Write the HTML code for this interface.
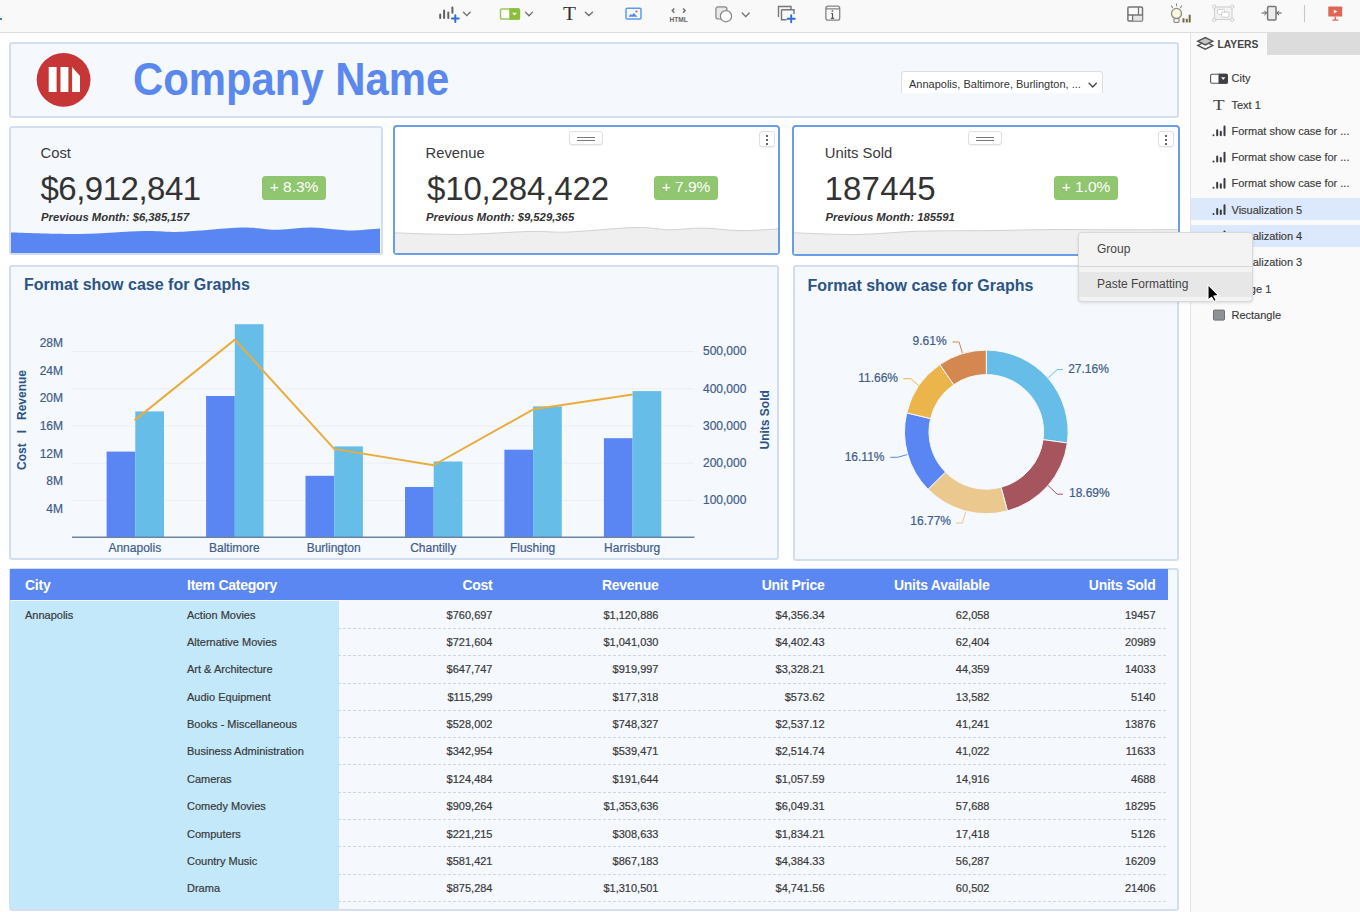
<!DOCTYPE html>
<html><head><meta charset="utf-8">
<style>
*{box-sizing:border-box;margin:0;padding:0}
html,body{width:1360px;height:912px;overflow:hidden;background:#fff;font-family:"Liberation Sans",sans-serif;position:relative}
.abs{position:absolute}
#toolbar{left:0;top:0;width:1360px;height:33px;background:#f9f9f9;border-bottom:1px solid #dcdedf}
#side{left:1190px;top:33px;width:170px;height:879px;background:#fafafa;border-left:1px solid #e3e3e3}
.panel{position:absolute;background:#f5f8fd;border:2px solid #d3dff1;border-radius:3px}
.sel{position:absolute;background:#fff;border:2px solid #6a9de6;border-radius:4px}
.kl{position:absolute;font-size:14.8px;line-height:1;color:#3a3a3a;white-space:nowrap}
.kv{position:absolute;font-size:33px;line-height:1;color:#333;white-space:nowrap}
.kp{position:absolute;font-size:11.3px;line-height:1;font-weight:bold;font-style:italic;color:#333;white-space:nowrap}
.badge{position:absolute;width:64px;height:23.5px;background:#90c66f;border-radius:3.5px;color:#fff;font-size:15.5px;text-align:center;line-height:22px}
.lay{position:absolute;left:1231.5px;font-size:11px;line-height:11px;color:#3a3a3a;white-space:nowrap;-webkit-text-stroke:0.15px #3a3a3a}
.hl{position:absolute;left:1191px;width:169px;background:#dce8fb}
.th{position:absolute;font-size:14px;font-weight:bold;color:#fff;line-height:14px;letter-spacing:-0.25px;white-space:nowrap}
.thr{width:300px;text-align:right}
.td{position:absolute;font-size:11px;color:#3a3a3a;line-height:11px;white-space:nowrap;-webkit-text-stroke:0.2px #3a3a3a}
.tdr{width:300px;text-align:right}
.dl{position:absolute;left:338px;width:830px;height:1px;background-image:linear-gradient(to right,#c9d6ea 0,#c9d6ea 3px,transparent 3px);background-size:5px 1px}
.handle{position:absolute;top:131px;width:34px;height:14px;background:#fff;border:1px solid #e0e0e0;border-radius:3px;box-shadow:0 1px 1px rgba(0,0,0,.06)}
.handle:before,.handle:after{content:"";position:absolute;left:7px;width:18px;height:1.3px;background:#7a7a7a}
.handle:before{top:4.5px}.handle:after{top:7.5px}
.kebab{position:absolute;top:131px;width:16px;height:16px;background:#fff;border:1px solid #e0e0e0;border-radius:3px;box-shadow:0 1px 1px rgba(0,0,0,.06)}
.kebab i{position:absolute;left:6px;width:2px;height:2px;background:#666}
</style></head>
<body>
<div id="toolbar" class="abs"></div>
<div class="abs" style="left:0;top:18px;width:2px;height:2px;background:#3b78e0"></div>
<svg class="abs" style="left:0;top:0" width="1360" height="33">
<g stroke-linecap="round" fill="none">
 <!-- chart add -->
 <g stroke="#626262" stroke-width="2"><path d="M440.2,14.6V18M444.1,10.4V18M448.3,12.5V18M452.4,7.6V12.7"/></g>
 <path d="M451.9,18.6H458.7M455.3,15.3V22" stroke="#2f6fd6" stroke-width="2"/>
 <path d="M463.5,12.3L466.8,15.6L470.1,12.3" stroke="#6e6e6e" stroke-width="1.3"/>
 <!-- selector -->
 <rect x="500.5" y="9" width="19" height="10" rx="1.5" stroke="#95c65a" stroke-width="1.5" fill="#fff"/>
 <path d="M509.3,8.3H518.5a1.5,1.5 0 0 1 1.5,1.5V18.2a1.5,1.5 0 0 1 -1.5,1.5H509.3Z" fill="#8bbf3b" stroke="none"/>
 <path d="M512.2,12.7H516.8L514.5,15.6Z" fill="#fff" stroke="none"/>
 <path d="M525.5,12.1L529,15.8L532.5,12.1" stroke="#6e6e6e" stroke-width="1.3"/>
 <!-- T -->
 <path d="M585.3,12.3L588.9,15.6L592.5,12.3" stroke="#6e6e6e" stroke-width="1.3"/>
 <!-- image -->
 <rect x="626" y="8.3" width="15" height="10.6" rx="1.2" stroke="#5b9bef" stroke-width="1.5"/>
 <path d="M628.5,16.7L630.6,14L632,15L633.8,12.9L637.6,16.7Z" fill="#4f8fe6" stroke="none"/>
 <circle cx="636.5" cy="11.5" r="1.1" fill="#e8554a" stroke="none"/>
 <!-- html -->
 <path d="M674.3,8.5L672.3,10.6L674.3,12.7M683.1,8.5L685.1,10.6L683.1,12.7" stroke="#6e6e6e" stroke-width="1.5" stroke-linecap="butt"/>
 <!-- shapes -->
 <rect x="715.9" y="6.8" width="11" height="12.2" rx="2.2" fill="#e9e9e9" stroke="#858585" stroke-width="1.2"/>
 <circle cx="726" cy="16.2" r="5.6" fill="#fff" stroke="#858585" stroke-width="1.2"/>
 <path d="M742.2,13L745.7,16.6L749.2,13" stroke="#6e6e6e" stroke-width="1.3"/>
 <!-- duplicate -->
 <path d="M778.5,17V6.5H791V9" stroke="#777" stroke-width="1.4" stroke-linecap="butt"/>
 <path d="M781.5,9.7H794V14M786.5,19.7H781.5V9.7" stroke="#777" stroke-width="1.4" stroke-linecap="butt"/>
 <path d="M787.6,18.7H794.8M791.2,15.1V22.3" stroke="#2f6fd6" stroke-width="1.9"/>
 <!-- info -->
 <rect x="825.9" y="6.2" width="13.8" height="14" rx="2.2" stroke="#858585" stroke-width="1.3"/>
 <path d="M826,8.8H839.6" stroke="#858585" stroke-width="1.3"/>
 <path d="M832.5,13.2V18.2M830.9,18.4H834.1M831.2,13.5H832.8" stroke="#555" stroke-width="1.2" stroke-linecap="butt"/>
 <circle cx="832.4" cy="11" r="0.85" fill="#555" stroke="none"/>
 <!-- layout -->
 <rect x="1127.9" y="7" width="14.6" height="14" rx="1" stroke="#747474" stroke-width="1.5"/>
 <path d="M1133,15.6H1142.2V20.6H1133Z" fill="#e4e4e4" stroke="none"/>
 <path d="M1128,15H1142.5M1138.5,7V15M1132.6,15V21" stroke="#747474" stroke-width="1.3" stroke-linecap="butt"/>
 <!-- bulb -->
 <circle cx="1176.5" cy="13.4" r="5" fill="#fcfbe0" stroke="#8b8b8b" stroke-width="1.3"/>
 <rect x="1174" y="18.6" width="5" height="3.8" rx="0.8" fill="#fff" stroke="#8b8b8b" stroke-width="1.2"/>
 <path d="M1176.5,3.8V5.8M1171.4,6L1172.5,7.6M1181.6,6L1180.5,7.6" stroke="#8b8b8b" stroke-width="1.1"/>
 <path d="M1183.5,18.2V22.4M1186.8,18.8V22.4M1189.7,14.8V22.4" stroke="#766d3f" stroke-width="2" stroke-linecap="butt"/>
 <!-- group (disabled) -->
 <rect x="1214.5" y="7" width="17.5" height="12.5" fill="#f3f3f3" stroke="#cfcfcf" stroke-width="1.1"/>
 <rect x="1217.5" y="9.4" width="6.9" height="5" rx="0.8" fill="#fff" stroke="#cfcfcf" stroke-width="1"/>
 <rect x="1221.6" y="12.2" width="7.4" height="5" rx="0.8" fill="#fff" stroke="#cfcfcf" stroke-width="1"/>
 <g fill="#fafafa" stroke="#cfcfcf" stroke-width="1"><circle cx="1214.2" cy="6.6" r="1.7"/><circle cx="1232.2" cy="6.6" r="1.7"/><circle cx="1214.2" cy="19.8" r="1.7"/><circle cx="1232.2" cy="19.8" r="1.7"/></g>
 <!-- fit -->
 <rect x="1267.6" y="6.6" width="8.4" height="13.4" rx="1" fill="#ececec" stroke="#777" stroke-width="1.5"/>
 <path d="M1261.6,13H1266.5M1264.4,10.8L1266.6,13L1264.4,15.2M1276.8,13H1281.6M1279,10.8L1276.8,13L1279,15.2" stroke="#555" stroke-width="1" stroke-linecap="butt"/>
 <!-- separator -->
 <path d="M1304.5,5V22.4" stroke="#c8c8c8" stroke-width="1.1" stroke-linecap="butt"/>
 <!-- present -->
 <rect x="1328.3" y="6.6" width="13.9" height="9.9" rx="0.6" fill="#df6652" stroke="none"/>
 <path d="M1335.2,16.5V19.8M1332.4,20.1H1338.3" stroke="#df6652" stroke-width="1.4" stroke-linecap="butt"/>
 <path d="M1333.8,9.7L1337.4,11.6L1333.8,13.5Z" fill="#fff" stroke="none"/>
</g>
<text x="563" y="19.7" font-family="Liberation Serif, serif" font-size="18.6" fill="#333" textLength="13" lengthAdjust="spacingAndGlyphs">T</text>
<text x="669.5" y="22.2" font-family="Liberation Sans, sans-serif" font-size="6.6" font-weight="bold" fill="#666">HTML</text>
</svg>


<!-- side panel -->
<div id="side" class="abs"></div>
<div class="abs" style="left:1267px;top:33px;width:93px;height:22px;background:#dcdcdc"></div>
<div class="abs" style="left:1217.5px;top:38.6px;font-size:10.3px;line-height:12px;font-weight:bold;color:#444">LAYERS</div>
<div class="hl" style="top:198px;height:22px"></div>
<div class="hl" style="top:225px;height:22px"></div>
<svg class="abs" style="left:1190px;top:33px" width="170" height="300">
 <g transform="translate(-1190,-33)">
 <path d="M1197.8,45.4L1205.3,41.7L1212.8,45.4L1205.3,49.1Z" fill="#fff" stroke="#555" stroke-width="1.4" stroke-linejoin="miter"/>
 <path d="M1197.8,41.2L1205.3,37.5L1212.8,41.2L1205.3,44.9Z" fill="#c6c6c6" stroke="#555" stroke-width="1.4" stroke-linejoin="miter"/>
 <!-- city selector -->
 <rect x="1210.6" y="74.3" width="16.8" height="9" rx="1.5" fill="#fff" stroke="#555" stroke-width="1.1"/>
 <path d="M1218.5,73.8H1226.4a1.5,1.5 0 0 1 1.5,1.5V82.2a1.5,1.5 0 0 1 -1.5,1.5H1218.5Z" fill="#3f3f45"/>
 <path d="M1221.1,77.2H1225.3L1223.2,80Z" fill="#fff"/>
 </g>
 <text x="23" y="77" font-family="Liberation Serif, serif" font-size="15.5" fill="#444" textLength="11.6" lengthAdjust="spacingAndGlyphs">T</text>
 <g transform="translate(-1190,-33)" stroke="#3a3a3a" stroke-width="2" stroke-linecap="round" fill="none">
 <path d="M1213.5,135.2V135.3M1217.2,130.2V135.3M1220.8,131.8V135.3M1224.5,126.4V135.3"/>
<path d="M1213.5,161.5V161.6M1217.2,156.5V161.6M1220.8,158.1V161.6M1224.5,152.7V161.6"/>
<path d="M1213.5,187.7V187.8M1217.2,182.7V187.8M1220.8,184.3V187.8M1224.5,178.9V187.8"/>
<path d="M1213.5,214.0V214.1M1217.2,209.0V214.1M1220.8,210.6V214.1M1224.5,205.2V214.1"/>
<path d="M1213.5,240.2V240.3M1217.2,235.2V240.3M1220.8,236.8V240.3M1224.5,231.4V240.3"/>
<path d="M1213.5,266.5V266.6M1217.2,261.5V266.6M1220.8,263.1V266.6M1224.5,257.7V266.6"/>
</g>
 <g transform="translate(-1190,-33)"><rect x="1213.5" y="310.1" width="11" height="10" rx="1" fill="#8f9296" stroke="#6d6f73" stroke-width="1"/></g>
</svg>

<div class="lay" style="top:73.4px">City</div>
<div class="lay" style="top:99.7px">Text 1</div>
<div class="lay" style="top:125.9px">Format show case for ...</div>
<div class="lay" style="top:152.2px">Format show case for ...</div>
<div class="lay" style="top:178.4px">Format show case for ...</div>
<div class="lay" style="top:204.7px">Visualization 5</div>
<div class="lay" style="top:230.9px">Visualization 4</div>
<div class="lay" style="top:257.2px">Visualization 3</div>
<div class="lay" style="top:283.5px">Image 1</div>
<div class="lay" style="top:309.7px">Rectangle</div>

<!-- header -->
<div class="panel" style="left:9px;top:42px;width:1170px;height:76px"></div>
<svg class="abs" style="left:0;top:0" width="120" height="120"><circle cx="63.6" cy="79.8" r="26.9" fill="#c73636"/><path d="M48.7,67.1h7.9v25h-7.9z M60.5,67.1h7.9v25h-7.9z M72.1,67.1 L80,75.9 V92.1 H72.1z" fill="#fff"/></svg>
<div class="abs" style="left:133px;top:56px;font-size:46px;line-height:46px;font-weight:bold;color:#5a88ee;white-space:nowrap;transform:scaleX(0.91);transform-origin:0 0">Company Name</div>
<div class="abs" style="left:901px;top:71px;width:202px;height:22px;background:#fff;border:1px solid #dedede;border-bottom:none;border-radius:3px 3px 0 0"></div>
<div class="abs" style="left:909px;top:78px;font-size:11px;color:#333;white-space:nowrap">Annapolis, Baltimore, Burlington, ...</div>
<svg class="abs" style="left:1085px;top:78px" width="16" height="14"><path d="M3.7,4.8 L7.7,9 L11.7,4.8" fill="none" stroke="#444" stroke-width="1.3"/></svg>

<!-- KPI cards -->
<div class="panel" style="left:9px;top:126px;width:374px;height:129px"></div>
<div class="sel" style="left:393px;top:125px;width:387px;height:130px"></div>
<div class="sel" style="left:792px;top:125px;width:388px;height:131px"></div>

<!-- waves -->
<svg class="abs" style="left:0;top:0" width="1360" height="912">
<path d="M11.0,232.6 C22.5,232.8 57.8,234.3 80.0,234.0 C102.2,233.7 126.8,231.4 144.0,231.0 C161.2,230.6 166.7,232.4 183.0,231.8 C199.3,231.2 226.2,227.9 242.0,227.6 C257.8,227.3 266.3,229.8 278.0,229.8 C289.7,229.8 300.3,227.5 312.0,227.6 C323.7,227.7 336.7,230.3 348.0,230.4 C359.3,230.5 374.7,228.7 380.0,228.4 L380,253 L11,253 Z" fill="#5a86f3"/>
<path d="M395.0,232.9 C406.0,233.2 438.5,234.6 461.0,234.4 C483.5,234.2 512.0,231.9 530.0,231.5 C548.0,231.1 551.5,232.7 569.0,232.0 C586.5,231.3 618.3,227.9 635.0,227.5 C651.7,227.1 657.7,229.7 669.0,229.8 C680.3,229.9 691.2,227.9 703.0,228.1 C714.8,228.2 727.5,230.5 740.0,230.7 C752.5,230.8 771.7,229.3 778.0,229.0 L778,253 L395,253 Z" fill="#efefef"/>
<path d="M395.0,232.9 C406.0,233.2 438.5,234.6 461.0,234.4 C483.5,234.2 512.0,231.9 530.0,231.5 C548.0,231.1 551.5,232.7 569.0,232.0 C586.5,231.3 618.3,227.9 635.0,227.5 C651.7,227.1 657.7,229.7 669.0,229.8 C680.3,229.9 691.2,227.9 703.0,228.1 C714.8,228.2 727.5,230.5 740.0,230.7 C752.5,230.8 771.7,229.3 778.0,229.0" fill="none" stroke="#d2d2d2" stroke-width="1"/>
<path d="M794.0,232.8 C804.5,233.1 835.8,234.8 857.0,234.5 C878.2,234.2 899.7,231.7 921.0,231.1 C942.3,230.5 963.7,230.9 985.0,230.7 C1006.3,230.4 1026.5,229.8 1049.0,229.6 C1071.5,229.4 1098.5,229.8 1120.0,229.8 C1141.5,229.8 1168.3,229.6 1178.0,229.5 L1178,254 L794,254 Z" fill="#efefef"/>
<path d="M794.0,232.8 C804.5,233.1 835.8,234.8 857.0,234.5 C878.2,234.2 899.7,231.7 921.0,231.1 C942.3,230.5 963.7,230.9 985.0,230.7 C1006.3,230.4 1026.5,229.8 1049.0,229.6 C1071.5,229.4 1098.5,229.8 1120.0,229.8 C1141.5,229.8 1168.3,229.6 1178.0,229.5" fill="none" stroke="#d2d2d2" stroke-width="1"/>
</svg>

<div class="kl" style="left:40.5px;top:146.3px">Cost</div>
<div class="kv" style="left:40.5px;top:171.7px;letter-spacing:-0.5px">$6,912,841</div>
<div class="kp" style="left:41px;top:211.6px">Previous Month: $6,385,157</div>
<div class="badge" style="left:262px;top:176px">+ 8.3%</div>

<div class="kl" style="left:425.5px;top:146.3px">Revenue</div>
<div class="kv" style="left:427px;top:171.7px;letter-spacing:-0.15px">$10,284,422</div>
<div class="kp" style="left:426px;top:211.6px">Previous Month: $9,529,365</div>
<div class="badge" style="left:654px;top:176px">+ 7.9%</div>

<div class="kl" style="left:824.8px;top:146.3px">Units Sold</div>
<div class="kv" style="left:824.5px;top:171.7px;letter-spacing:0.2px">187445</div>
<div class="kp" style="left:825.5px;top:211.6px">Previous Month: 185591</div>
<div class="badge" style="left:1054px;top:176px">+ 1.0%</div>

<!-- chart panels -->
<div class="panel" style="left:9px;top:265px;width:770px;height:295px"></div>
<div class="panel" style="left:793px;top:265px;width:386px;height:296px"></div>


<!-- handles -->
<div class="handle" style="left:569px"></div>
<div class="handle" style="left:968px"></div>
<div class="kebab" style="left:759px"><i style="top:3px"></i><i style="top:7px"></i><i style="top:11px"></i></div>
<div class="kebab" style="left:1158px"><i style="top:3px"></i><i style="top:7px"></i><i style="top:11px"></i></div>

<!-- charts -->
<svg class="abs" style="left:0;top:0" width="1360" height="912" font-family="Liberation Sans, sans-serif">
<text x="24" y="290" font-size="16" font-weight="bold" fill="#2c5585">Format show case for Graphs</text>
<text x="807.5" y="290.5" font-size="16" font-weight="bold" fill="#2c5585">Format show case for Graphs</text>
<line x1="72" x2="694" y1="500.4" y2="500.4" stroke="#edeeee" stroke-width="1"/>
<line x1="72" x2="694" y1="463.2" y2="463.2" stroke="#edeeee" stroke-width="1"/>
<line x1="72" x2="694" y1="426.0" y2="426.0" stroke="#edeeee" stroke-width="1"/>
<line x1="72" x2="694" y1="388.8" y2="388.8" stroke="#edeeee" stroke-width="1"/>
<line x1="72" x2="694" y1="351.6" y2="351.6" stroke="#edeeee" stroke-width="1"/>
<rect x="106.6" y="451.6" width="28.7" height="85.4" fill="#5a86f3"/>
<rect x="135.3" y="411.4" width="28.7" height="125.6" fill="#66bde8"/>
<rect x="206.1" y="396" width="28.7" height="141.0" fill="#5a86f3"/>
<rect x="234.8" y="324.2" width="28.7" height="212.8" fill="#66bde8"/>
<rect x="305.5" y="475.8" width="28.7" height="61.2" fill="#5a86f3"/>
<rect x="334.2" y="446.4" width="28.7" height="90.6" fill="#66bde8"/>
<rect x="405.0" y="487" width="28.7" height="50.0" fill="#5a86f3"/>
<rect x="433.7" y="461.5" width="28.7" height="75.5" fill="#66bde8"/>
<rect x="504.4" y="449.7" width="28.7" height="87.3" fill="#5a86f3"/>
<rect x="533.1" y="406.4" width="28.7" height="130.6" fill="#66bde8"/>
<rect x="603.9" y="438.2" width="28.7" height="98.8" fill="#5a86f3"/>
<rect x="632.6" y="391.1" width="28.7" height="145.9" fill="#66bde8"/>
<line x1="72" x2="694.5" y1="537.3" y2="537.3" stroke="#6a84a6" stroke-width="1.5"/>
<polyline fill="none" stroke="#e9ad3e" stroke-width="2" points="134.5,420.4 234.8,339.6 334.2,448.9 433.4,465.3 533.7,409.2 632.6,394.4"/>
<text x="63" y="513.1" font-size="12" fill="#415d87" stroke="#415d87" stroke-width="0.2" text-anchor="end">4M</text>
<text x="63" y="485.4" font-size="12" fill="#415d87" stroke="#415d87" stroke-width="0.2" text-anchor="end">8M</text>
<text x="63" y="457.7" font-size="12" fill="#415d87" stroke="#415d87" stroke-width="0.2" text-anchor="end">12M</text>
<text x="63" y="430.0" font-size="12" fill="#415d87" stroke="#415d87" stroke-width="0.2" text-anchor="end">16M</text>
<text x="63" y="402.3" font-size="12" fill="#415d87" stroke="#415d87" stroke-width="0.2" text-anchor="end">20M</text>
<text x="63" y="374.6" font-size="12" fill="#415d87" stroke="#415d87" stroke-width="0.2" text-anchor="end">24M</text>
<text x="63" y="346.9" font-size="12" fill="#415d87" stroke="#415d87" stroke-width="0.2" text-anchor="end">28M</text>
<text x="703" y="504.2" font-size="12" fill="#415d87" stroke="#415d87" stroke-width="0.2">100,000</text>
<text x="703" y="467.0" font-size="12" fill="#415d87" stroke="#415d87" stroke-width="0.2">200,000</text>
<text x="703" y="429.8" font-size="12" fill="#415d87" stroke="#415d87" stroke-width="0.2">300,000</text>
<text x="703" y="392.6" font-size="12" fill="#415d87" stroke="#415d87" stroke-width="0.2">400,000</text>
<text x="703" y="355.4" font-size="12" fill="#415d87" stroke="#415d87" stroke-width="0.2">500,000</text>
<text x="134.8" y="551.6" font-size="12" fill="#415d87" stroke="#415d87" stroke-width="0.2" text-anchor="middle">Annapolis</text>
<text x="234.3" y="551.6" font-size="12" fill="#415d87" stroke="#415d87" stroke-width="0.2" text-anchor="middle">Baltimore</text>
<text x="333.7" y="551.6" font-size="12" fill="#415d87" stroke="#415d87" stroke-width="0.2" text-anchor="middle">Burlington</text>
<text x="433.2" y="551.6" font-size="12" fill="#415d87" stroke="#415d87" stroke-width="0.2" text-anchor="middle">Chantilly</text>
<text x="532.6" y="551.6" font-size="12" fill="#415d87" stroke="#415d87" stroke-width="0.2" text-anchor="middle">Flushing</text>
<text x="632.1" y="551.6" font-size="12" fill="#415d87" stroke="#415d87" stroke-width="0.2" text-anchor="middle">Harrisburg</text>
<text transform="translate(26.3,420) rotate(-90)" font-size="12" font-weight="bold" fill="#2c5585" text-anchor="middle" xml:space="preserve">Cost   I   Revenue</text>
<text transform="translate(768.9,419.8) rotate(-90)" font-size="12" font-weight="bold" fill="#2c5585" text-anchor="middle">Units Sold</text>
<path d="M986.30,350.10 A81.8,81.8 0 0 1 1067.35,442.97 L1043.07,439.65 A57.3,57.3 0 0 0 986.30,374.60 Z" fill="#66bde8" stroke="#f5f8fd" stroke-width="1"/>
<path d="M1067.35,442.97 A81.8,81.8 0 0 1 1007.39,510.93 L1001.07,487.26 A57.3,57.3 0 0 0 1043.07,439.65 Z" fill="#a6555e" stroke="#f5f8fd" stroke-width="1"/>
<path d="M1007.39,510.93 A81.8,81.8 0 0 1 928.02,489.30 L945.48,472.11 A57.3,57.3 0 0 0 1001.07,487.26 Z" fill="#eac88e" stroke="#f5f8fd" stroke-width="1"/>
<path d="M928.02,489.30 A81.8,81.8 0 0 1 906.74,412.90 L930.57,418.59 A57.3,57.3 0 0 0 945.48,472.11 Z" fill="#5a86f3" stroke="#f5f8fd" stroke-width="1"/>
<path d="M906.74,412.90 A81.8,81.8 0 0 1 939.86,364.56 L953.77,384.73 A57.3,57.3 0 0 0 930.57,418.59 Z" fill="#ecb54b" stroke="#f5f8fd" stroke-width="1"/>
<path d="M939.86,364.56 A81.8,81.8 0 0 1 986.30,350.10 L986.30,374.60 A57.3,57.3 0 0 0 953.77,384.73 Z" fill="#d4874f" stroke="#f5f8fd" stroke-width="1"/>
<polyline fill="none" stroke="#66bde8" stroke-width="1" points="1048.4,377.7 1057.2,369.6 1063,369.6"/>
<text x="1068.2" y="372.8" font-size="12" fill="#415d87" stroke="#415d87" stroke-width="0.2" text-anchor="start">27.16%</text>
<polyline fill="none" stroke="#a6555e" stroke-width="1" points="1047.5,485 1057.2,494.2 1063,494.2"/>
<text x="1069" y="497" font-size="12" fill="#415d87" stroke="#415d87" stroke-width="0.2" text-anchor="start">18.69%</text>
<polyline fill="none" stroke="#eac88e" stroke-width="1" points="965.7,511.7 962.4,523 955.8,523"/>
<text x="951" y="524.8" font-size="12" fill="#415d87" stroke="#415d87" stroke-width="0.2" text-anchor="end">16.77%</text>
<polyline fill="none" stroke="#5a86f3" stroke-width="1" points="907.1,454.6 897.7,457.3 890.3,457.3"/>
<text x="884.5" y="460.5" font-size="12" fill="#415d87" stroke="#415d87" stroke-width="0.2" text-anchor="end">16.11%</text>
<polyline fill="none" stroke="#ecb54b" stroke-width="1" points="918.5,385.3 910.8,378.7 903.2,378.7"/>
<text x="898" y="382" font-size="12" fill="#415d87" stroke="#415d87" stroke-width="0.2" text-anchor="end">11.66%</text>
<polyline fill="none" stroke="#d4874f" stroke-width="1" points="962.4,353 959.1,342 952.5,342"/>
<text x="946.6" y="345.4" font-size="12" fill="#415d87" stroke="#415d87" stroke-width="0.2" text-anchor="end">9.61%</text>
</svg>

<!-- table -->
<div class="panel" style="left:9px;top:568px;width:1170px;height:343px"></div>
<div class="abs" style="left:10px;top:569px;width:1158px;height:31px;background:#5b87f2"></div>
<div class="abs" style="left:10px;top:601px;width:329px;height:308px;background:#c2e8fa"></div>
<div class="th" style="left:25px;top:577.8px">City</div>
<div class="th" style="left:187px;top:577.8px">Item Category</div>
<div class="th thr" style="left:192.5px;top:577.8px">Cost</div>
<div class="th thr" style="left:358.5px;top:577.8px">Revenue</div>
<div class="th thr" style="left:524.5px;top:577.8px">Unit Price</div>
<div class="th thr" style="left:689.5px;top:577.8px">Units Available</div>
<div class="th thr" style="left:855.5px;top:577.8px">Units Sold</div>
<div class="dl" style="top:628px"></div>
<div class="dl" style="top:655px"></div>
<div class="dl" style="top:683px"></div>
<div class="dl" style="top:710px"></div>
<div class="dl" style="top:737px"></div>
<div class="dl" style="top:764px"></div>
<div class="dl" style="top:792px"></div>
<div class="dl" style="top:819px"></div>
<div class="dl" style="top:846px"></div>
<div class="dl" style="top:874px"></div>
<div class="dl" style="top:901px"></div>
<div class="td" style="left:25px;top:609.6px">Annapolis</div>
<div class="td" style="left:187px;top:609.6px">Action Movies</div>
<div class="td tdr" style="left:192.5px;top:609.6px">$760,697</div>
<div class="td tdr" style="left:358.5px;top:609.6px">$1,120,886</div>
<div class="td tdr" style="left:524.5px;top:609.6px">$4,356.34</div>
<div class="td tdr" style="left:689.5px;top:609.6px">62,058</div>
<div class="td tdr" style="left:855.5px;top:609.6px">19457</div>
<div class="td" style="left:187px;top:637.0px">Alternative Movies</div>
<div class="td tdr" style="left:192.5px;top:637.0px">$721,604</div>
<div class="td tdr" style="left:358.5px;top:637.0px">$1,041,030</div>
<div class="td tdr" style="left:524.5px;top:637.0px">$4,402.43</div>
<div class="td tdr" style="left:689.5px;top:637.0px">62,404</div>
<div class="td tdr" style="left:855.5px;top:637.0px">20989</div>
<div class="td" style="left:187px;top:664.3px">Art &amp; Architecture</div>
<div class="td tdr" style="left:192.5px;top:664.3px">$647,747</div>
<div class="td tdr" style="left:358.5px;top:664.3px">$919,997</div>
<div class="td tdr" style="left:524.5px;top:664.3px">$3,328.21</div>
<div class="td tdr" style="left:689.5px;top:664.3px">44,359</div>
<div class="td tdr" style="left:855.5px;top:664.3px">14033</div>
<div class="td" style="left:187px;top:691.7px">Audio Equipment</div>
<div class="td tdr" style="left:192.5px;top:691.7px">$115,299</div>
<div class="td tdr" style="left:358.5px;top:691.7px">$177,318</div>
<div class="td tdr" style="left:524.5px;top:691.7px">$573.62</div>
<div class="td tdr" style="left:689.5px;top:691.7px">13,582</div>
<div class="td tdr" style="left:855.5px;top:691.7px">5140</div>
<div class="td" style="left:187px;top:719.0px">Books - Miscellaneous</div>
<div class="td tdr" style="left:192.5px;top:719.0px">$528,002</div>
<div class="td tdr" style="left:358.5px;top:719.0px">$748,327</div>
<div class="td tdr" style="left:524.5px;top:719.0px">$2,537.12</div>
<div class="td tdr" style="left:689.5px;top:719.0px">41,241</div>
<div class="td tdr" style="left:855.5px;top:719.0px">13876</div>
<div class="td" style="left:187px;top:746.4px">Business Administration</div>
<div class="td tdr" style="left:192.5px;top:746.4px">$342,954</div>
<div class="td tdr" style="left:358.5px;top:746.4px">$539,471</div>
<div class="td tdr" style="left:524.5px;top:746.4px">$2,514.74</div>
<div class="td tdr" style="left:689.5px;top:746.4px">41,022</div>
<div class="td tdr" style="left:855.5px;top:746.4px">11633</div>
<div class="td" style="left:187px;top:773.8px">Cameras</div>
<div class="td tdr" style="left:192.5px;top:773.8px">$124,484</div>
<div class="td tdr" style="left:358.5px;top:773.8px">$191,644</div>
<div class="td tdr" style="left:524.5px;top:773.8px">$1,057.59</div>
<div class="td tdr" style="left:689.5px;top:773.8px">14,916</div>
<div class="td tdr" style="left:855.5px;top:773.8px">4688</div>
<div class="td" style="left:187px;top:801.1px">Comedy Movies</div>
<div class="td tdr" style="left:192.5px;top:801.1px">$909,264</div>
<div class="td tdr" style="left:358.5px;top:801.1px">$1,353,636</div>
<div class="td tdr" style="left:524.5px;top:801.1px">$6,049.31</div>
<div class="td tdr" style="left:689.5px;top:801.1px">57,688</div>
<div class="td tdr" style="left:855.5px;top:801.1px">18295</div>
<div class="td" style="left:187px;top:828.5px">Computers</div>
<div class="td tdr" style="left:192.5px;top:828.5px">$221,215</div>
<div class="td tdr" style="left:358.5px;top:828.5px">$308,633</div>
<div class="td tdr" style="left:524.5px;top:828.5px">$1,834.21</div>
<div class="td tdr" style="left:689.5px;top:828.5px">17,418</div>
<div class="td tdr" style="left:855.5px;top:828.5px">5126</div>
<div class="td" style="left:187px;top:855.8px">Country Music</div>
<div class="td tdr" style="left:192.5px;top:855.8px">$581,421</div>
<div class="td tdr" style="left:358.5px;top:855.8px">$867,183</div>
<div class="td tdr" style="left:524.5px;top:855.8px">$4,384.33</div>
<div class="td tdr" style="left:689.5px;top:855.8px">56,287</div>
<div class="td tdr" style="left:855.5px;top:855.8px">16209</div>
<div class="td" style="left:187px;top:883.2px">Drama</div>
<div class="td tdr" style="left:192.5px;top:883.2px">$875,284</div>
<div class="td tdr" style="left:358.5px;top:883.2px">$1,310,501</div>
<div class="td tdr" style="left:524.5px;top:883.2px">$4,741.56</div>
<div class="td tdr" style="left:689.5px;top:883.2px">60,502</div>
<div class="td tdr" style="left:855.5px;top:883.2px">21406</div>



<!-- context menu -->
<div class="abs" style="left:1078px;top:232px;width:175px;height:70px;background:#f3f3f3;border:1px solid #d9d9d9;border-radius:4px;box-shadow:0 1px 3px rgba(0,0,0,.12)"></div>
<div class="abs" style="left:1079px;top:266px;width:173px;height:1px;background:#d5d5d5"></div>
<div class="abs" style="left:1079px;top:272px;width:173px;height:25px;background:#e7e7e7"></div>
<div class="abs" style="left:1097px;top:243.3px;font-size:12px;line-height:12px;color:#444;white-space:nowrap">Group</div>
<div class="abs" style="left:1097px;top:277.6px;font-size:12px;line-height:12px;color:#444;white-space:nowrap">Paste Formatting</div>
<svg class="abs" style="left:1200px;top:280px" width="26" height="28"><path d="M8,4.6 V19.9 L11.6,17.3 L14,21.4 L16.3,20.5 L13.9,16 L18.7,15.6 Z" fill="#000" stroke="#fff" stroke-width="1.1" stroke-linejoin="round"/></svg>
</body></html>
